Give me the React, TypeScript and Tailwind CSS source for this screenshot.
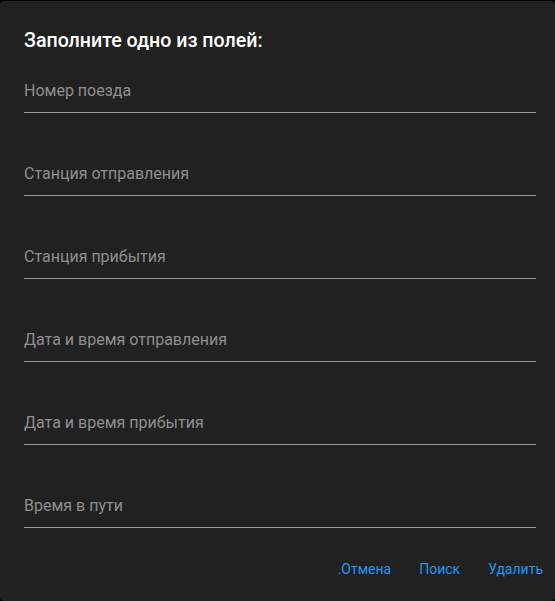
import React from 'react';

const fields = [
  'Номер поезда',
  'Станция отправления',
  'Станция прибытия',
  'Дата и время отправления',
  'Дата и время прибытия',
  'Время в пути',
];

export default function App() {
  return (
    <div className="h-[601px] w-[555px] bg-black pt-px" style={{ fontFamily: 'Roboto, "Noto Sans", sans-serif' }}>
      <div className="h-[600px] rounded-[4px] bg-[#212121]">
        <div className="pl-6 pt-6">
          <h2 className="h-8 text-[19.6px] font-medium leading-8 text-white">Заполните одно из полей:</h2>
        </div>
        <div className="mt-[22px] flex flex-col gap-[49px] pl-6 pr-[19px]">
          {fields.map(label => (
            <div key={label}>
              <div className="h-6 text-[16px] leading-6 text-[#8f8f8f]">{label}</div>
              <div className="mt-[9px] h-px bg-[#9a9a9a]" />
            </div>
          ))}
        </div>
        <div className="mt-[23px] flex h-9 items-center justify-end gap-[28px] pr-3 text-[14px] text-[#2196f3]">
          <button>.Отмена</button>
          <button>Поиск</button>
          <button>Удалить</button>
        </div>
      </div>
    </div>
  );
}
